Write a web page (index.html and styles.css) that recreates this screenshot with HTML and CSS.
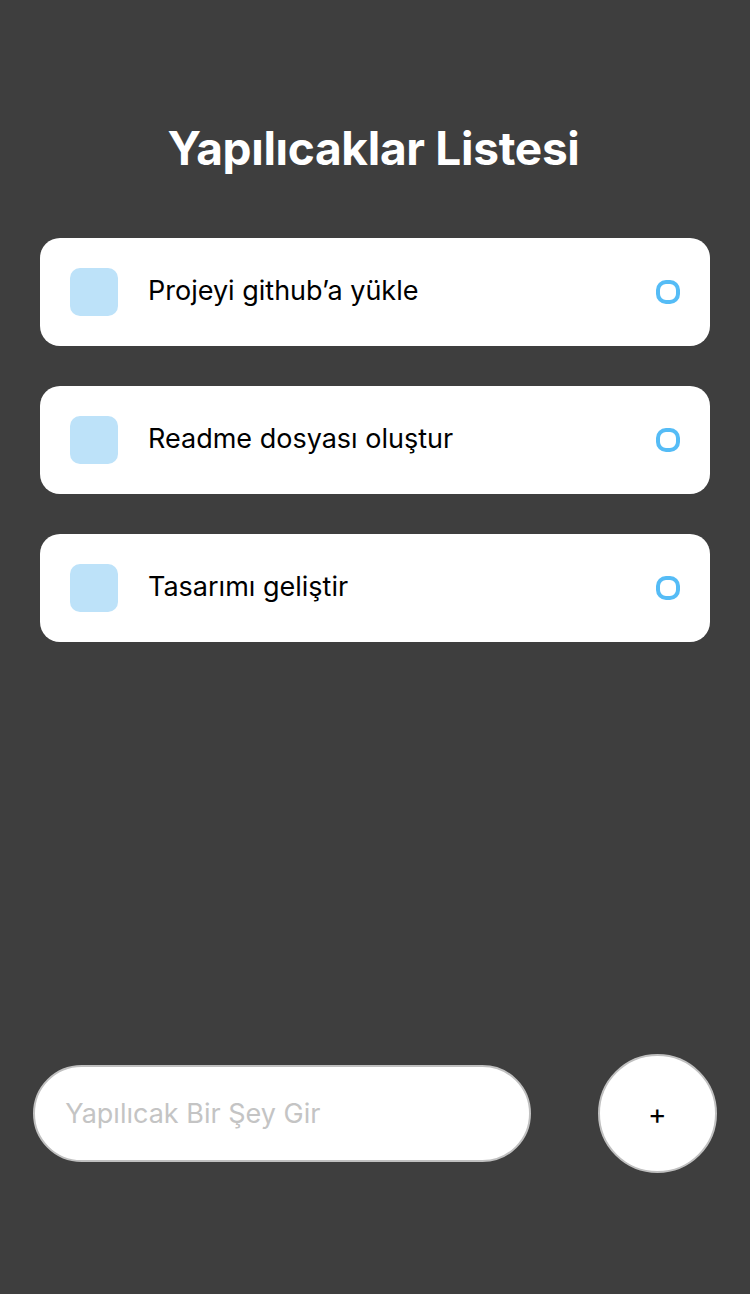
FILE: index.html
```html
<!DOCTYPE html>
<html lang="tr">
<head>
<meta charset="utf-8">
<title>Yapılıcaklar Listesi</title>
<link rel="stylesheet" href="styles.css">
</head>
<body>
<div class="app">
  <main class="tasks">
    <h1 class="title">Yapılıcaklar Listesi</h1>
    <ul class="list">
      <li class="item">
        <span class="square"></span>
        <span class="text">Projeyi github’a yükle</span>
        <span class="circle"></span>
      </li>
      <li class="item">
        <span class="square"></span>
        <span class="text">Readme dosyası oluştur</span>
        <span class="circle"></span>
      </li>
      <li class="item">
        <span class="square"></span>
        <span class="text">Tasarımı geliştir</span>
        <span class="circle"></span>
      </li>
    </ul>
  </main>
  <footer class="composer">
    <input class="field" type="text" placeholder="Yapılıcak Bir Şey Gir">
    <button class="add">+</button>
  </footer>
</div>
</body>
</html>
```
FILE: styles.css
```css
* { box-sizing: border-box; }
html, body { margin: 0; padding: 0; }
body {
  background: #3e3e3e;
  font-family: Inter, "Noto Sans", sans-serif;
}
.app {
  height: 1294px;
  display: flex;
  flex-direction: column;
}
.tasks {
  padding: 118px 40px 0;
}
.title {
  margin: 0 0 0 -3px;
  color: #fff;
  font-size: 46px;
  font-weight: 700;
  line-height: 60px;
  text-align: center;
  letter-spacing: -0.3px;
}
.list {
  list-style: none;
  margin: 60px 0 0;
  padding: 0;
  display: flex;
  flex-direction: column;
  gap: 40px;
}
.item {
  background: #fff;
  border-radius: 20px;
  height: 108px;
  padding: 0 30px;
  display: flex;
  align-items: center;
}
.square {
  width: 48px;
  height: 48px;
  border-radius: 10px;
  background: #bde2f9;
  flex: none;
}
.text {
  flex: 1;
  margin-left: 30px;
  margin-bottom: 3px;
  font-size: 27px;
  color: #000;
}
.circle {
  width: 24px;
  height: 24px;
  border: 4px solid #55bcf6;
  border-radius: 10px;
  flex: none;
}
.composer {
  margin-top: auto;
  padding-bottom: 121px;
  display: flex;
  justify-content: space-around;
  align-items: center;
}
.field {
  width: 498px;
  height: 97px;
  border: 2px solid #c0c0c0;
  border-radius: 49px;
  background: #fff;
  padding: 0 30px;
  font-family: Inter, "Noto Sans", sans-serif;
  font-size: 27px;
  color: #000;
  outline: none;
}
.field::placeholder { color: #c4c4c4; }
.add {
  width: 119px;
  height: 119px;
  border-radius: 50%;
  border: 2px solid #c0c0c0;
  background: #fff;
  font-family: Inter, "Noto Sans", sans-serif;
  font-size: 28px;
  color: #000;
  padding: 0;
}
```
